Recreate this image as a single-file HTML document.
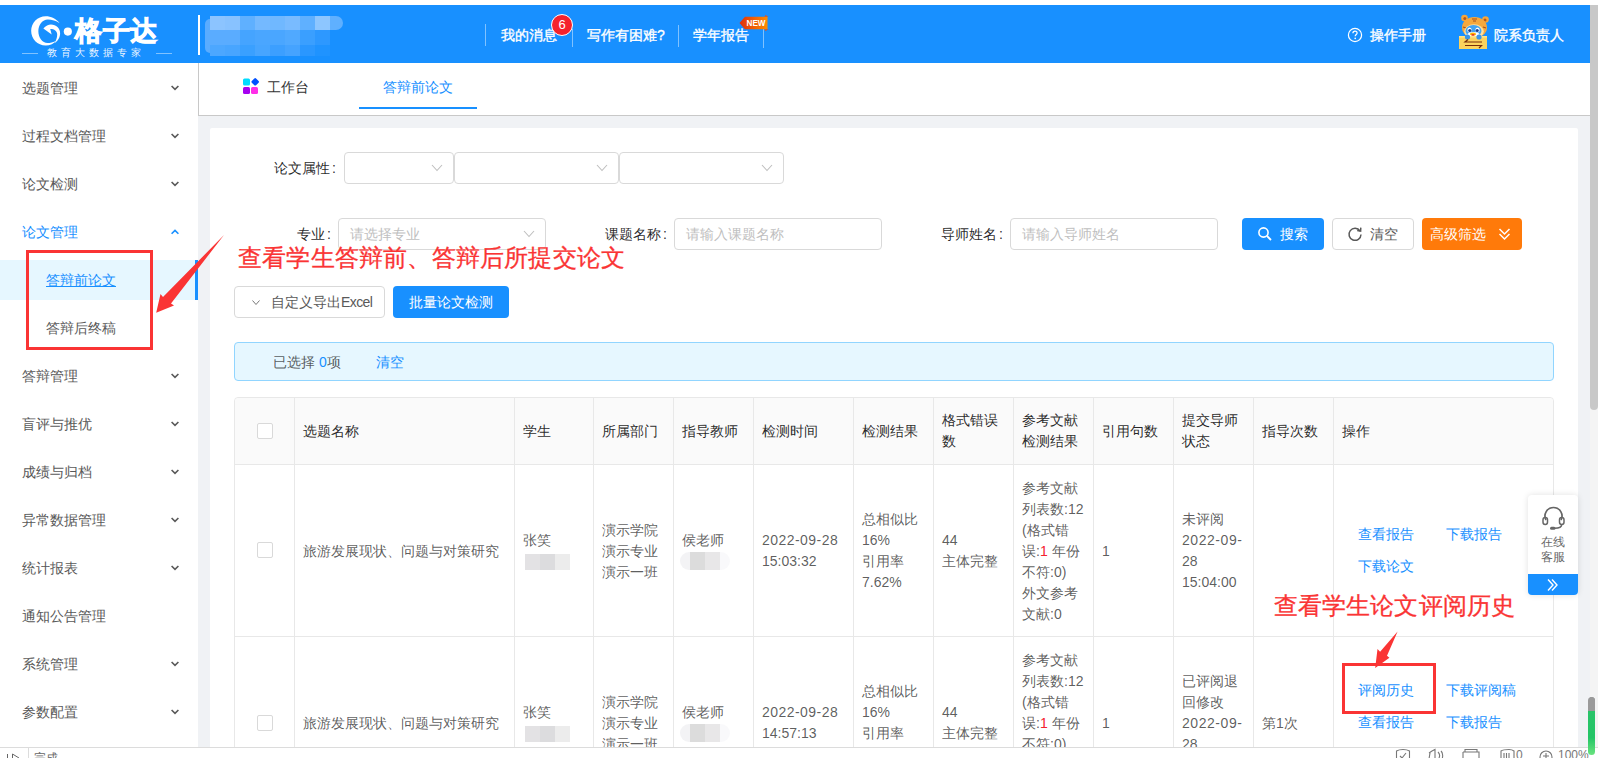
<!DOCTYPE html><html><head><meta charset="utf-8"><style>
*{box-sizing:border-box;margin:0;padding:0}
html,body{width:1598px;height:758px;overflow:hidden;background:#fff}
body{position:relative;font-family:"Liberation Sans",sans-serif;font-size:14px;color:rgba(0,0,0,.65);line-height:21px}
.a{position:absolute;white-space:nowrap}
.w{color:#fff;-webkit-text-stroke:0.35px #fff}
.mi{position:absolute;left:22px;color:#595959;white-space:nowrap}
.lbl{position:absolute;color:rgba(0,0,0,.85);white-space:nowrap}
.th{position:absolute;color:rgba(0,0,0,.85);white-space:nowrap}
.td{position:absolute;color:rgba(0,0,0,.65);white-space:nowrap}
.lk{position:absolute;color:#1890ff;white-space:nowrap}
.box{position:absolute}
.sel{position:absolute;border:1px solid #d9d9d9;border-radius:4px;background:#fff;height:32px}
.ph{position:absolute;color:#bfbfbf;white-space:nowrap}
.cb{position:absolute;width:16px;height:16px;border:1px solid #d9d9d9;border-radius:2px;background:#fff}
.vl{position:absolute;width:1px;background:#e8e8e8}
</style></head><body>
<div class="box" style="left:0px;top:5px;width:1590px;height:58px;background:#1890ff"></div>
<svg class="box" style="left:27px;top:11px" width="50" height="38" viewBox="0 0 48 36">
<path fill="#fff" d="M31.3 11.4 C28 7 23 4.7 18 4.7 C10 4.7 4 11 4 18.7 C4 26.5 10 32.8 18 32.8 C22 32.8 26 31 28.5 28 C25 30 22 30.4 19.7 30.4 C14.8 30.4 10.9 25.3 10.9 19.1 C10.9 12.9 14.8 7.8 20 7.8 C24 7.8 28 9 31.3 11.4 Z"/>
<path fill="#fff" d="M15.7 16.6 C18 14 20.5 12.8 23 12.8 C28 12.8 31.8 16.5 31.8 21 C31.8 25 29.5 28.5 26.6 30.4 C28 28 29 25 29 22.3 C29 19 26 17 22.3 17.1 L23.7 22.3 Z"/>
<circle cx="39.2" cy="19.5" r="3.9" fill="#fff"/>
</svg>
<div class="a w" style="left:75px;top:13px;font-size:27px;line-height:36px;font-weight:bold;letter-spacing:0.5px;-webkit-text-stroke:1px #fff">格子达</div>
<div class="a" style="left:47px;top:47px;font-size:9.5px;line-height:12px;letter-spacing:4px;color:rgba(255,255,255,.92)">教育大数据专家</div>
<div class="box" style="left:22px;top:53px;width:16px;height:1px;background:rgba(255,255,255,.45)"></div>
<div class="box" style="left:156px;top:53px;width:16px;height:1px;background:rgba(255,255,255,.45)"></div>
<div class="box" style="left:198px;top:15px;width:2px;height:40px;background:#fff"></div>
<div class="box" style="left:210px;top:16px;width:15px;height:14px;background:#8cc4ff"></div>
<div class="box" style="left:225px;top:16px;width:15px;height:14px;background:#88c2ff"></div>
<div class="box" style="left:240px;top:16px;width:15px;height:14px;background:#5fb0ff"></div>
<div class="box" style="left:255px;top:16px;width:15px;height:14px;background:#74b9ff"></div>
<div class="box" style="left:270px;top:16px;width:15px;height:14px;background:#70b8ff"></div>
<div class="box" style="left:285px;top:16px;width:15px;height:14px;background:#79bbff"></div>
<div class="box" style="left:300px;top:16px;width:15px;height:14px;background:#5fb0ff"></div>
<div class="box" style="left:315px;top:16px;width:15px;height:14px;background:#8dc6ff"></div>
<div class="box" style="left:210px;top:30px;width:15px;height:15px;background:#5aacff"></div>
<div class="box" style="left:225px;top:30px;width:15px;height:15px;background:#5aacff"></div>
<div class="box" style="left:240px;top:30px;width:15px;height:15px;background:#45a4ff"></div>
<div class="box" style="left:255px;top:30px;width:15px;height:15px;background:#4aa6ff"></div>
<div class="box" style="left:270px;top:30px;width:15px;height:15px;background:#4aa6ff"></div>
<div class="box" style="left:285px;top:30px;width:15px;height:15px;background:#50a9ff"></div>
<div class="box" style="left:300px;top:30px;width:15px;height:15px;background:#3a9fff"></div>
<div class="box" style="left:315px;top:30px;width:15px;height:15px;background:#2d98ff"></div>
<div class="box" style="left:210px;top:45px;width:15px;height:11px;background:#4ca7ff"></div>
<div class="box" style="left:225px;top:45px;width:15px;height:11px;background:#48a5ff"></div>
<div class="box" style="left:240px;top:45px;width:15px;height:11px;background:#3aa0ff"></div>
<div class="box" style="left:255px;top:45px;width:15px;height:11px;background:#47a5ff"></div>
<div class="box" style="left:270px;top:45px;width:15px;height:11px;background:#3c9fff"></div>
<div class="box" style="left:285px;top:45px;width:15px;height:11px;background:#45a3ff"></div>
<div class="box" style="left:300px;top:45px;width:15px;height:11px;background:#2a97ff"></div>
<div class="box" style="left:315px;top:45px;width:15px;height:11px;background:#1f93ff"></div>
<div class="box" style="left:205px;top:19px;width:5px;height:34px;background:#5aacff;border-radius:5px 0 0 5px"></div>
<div class="box" style="left:330px;top:16px;width:13px;height:14px;background:#5fb0ff;border-radius:0 7px 7px 0"></div>
<div class="box" style="left:485px;top:24px;width:1px;height:22px;background:rgba(255,255,255,.45)"></div>
<div class="box" style="left:572px;top:29px;width:1px;height:18px;background:rgba(255,255,255,.45)"></div>
<div class="box" style="left:678px;top:25px;width:1px;height:22px;background:rgba(255,255,255,.45)"></div>
<div class="box" style="left:763px;top:29px;width:1px;height:19px;background:rgba(255,255,255,.45)"></div>
<div class="a w" style="left:501px;top:24.5px;">我的消息</div>
<div class="box" style="left:551px;top:14px;width:22px;height:22px;border-radius:11px;background:#f5222d;border:1.5px solid #fff;color:#fff;font-size:13px;line-height:19px;text-align:center">6</div>
<div class="a w" style="left:587px;top:24.5px;">写作有困难?</div>
<div class="a w" style="left:693px;top:24.5px;">学年报告</div>
<svg class="box" style="left:739px;top:15px" width="30" height="16" viewBox="0 0 30 16">
<defs><linearGradient id="ng" x1="0" x2="1"><stop offset="0" stop-color="#e0300c"/><stop offset="1" stop-color="#ff8c00"/></linearGradient></defs>
<path d="M0.5 8 L6 1.8 L28.5 1.8 L28.5 14.2 L6 14.2 Z" fill="url(#ng)"/><path d="M25.5 1.8 L26.5 0 L29.5 1.8 Z M25.5 14.2 L26.5 16 L29.5 14.2 Z" fill="#e8501a"/>
<text x="7.5" y="10.9" font-family="Liberation Sans" font-size="9" font-weight="bold" fill="#fff" textLength="19" lengthAdjust="spacingAndGlyphs">NEW</text>
</svg>
<svg class="box" style="left:1347px;top:27px" width="16" height="16" viewBox="0 0 16 16">
<circle cx="8" cy="8" r="6.6" fill="none" stroke="#fff" stroke-width="1.2"/>
<path d="M5.9 6.3 C5.9 4.9 6.9 4.2 8 4.2 C9.2 4.2 10.1 5 10.1 6.1 C10.1 7.4 8.2 7.6 8.2 9.3" fill="none" stroke="#fff" stroke-width="1.2"/>
<circle cx="8.2" cy="11.4" r="0.8" fill="#fff"/>
</svg>
<div class="a w" style="left:1370px;top:24.5px;">操作手册</div>
<svg class="box" style="left:1452px;top:10px" width="42" height="42" viewBox="0 0 42 42">
<circle cx="12.5" cy="8" r="3.3" fill="#f6a53a"/><circle cx="33.5" cy="9.5" r="3.3" fill="#f6a53a"/>
<circle cx="12.8" cy="8.5" r="1.5" fill="#b5561a"/><circle cx="33" cy="10" r="1.5" fill="#b5561a"/>
<ellipse cx="22.5" cy="17.5" rx="12.5" ry="10.5" fill="#f7a83c"/>
<path d="M20 9 L25 9 M21 11 L24 11 M11 17 L14 18 M31 17 L34 18" stroke="#a8501a" stroke-width="1.2"/>
<ellipse cx="22" cy="21.5" rx="9.8" ry="7.2" fill="#fde0a0"/>
<ellipse cx="21.5" cy="21" rx="8" ry="6" fill="#43a3f2"/>
<ellipse cx="17.5" cy="20" rx="2.2" ry="2.6" fill="#fff"/><ellipse cx="25.5" cy="20" rx="2.2" ry="2.6" fill="#fff"/>
<circle cx="17.8" cy="20.5" r="1.6" fill="#1a3f8f"/><circle cx="25.2" cy="20.5" r="1.6" fill="#1a3f8f"/>
<ellipse cx="21.5" cy="24.5" rx="6" ry="2.5" fill="#fff"/>
<ellipse cx="21" cy="24" rx="3" ry="1.6" fill="#ffb300"/><ellipse cx="21" cy="24.8" rx="1.6" ry="0.9" fill="#e8322a"/>
<rect x="7" y="26" width="28" height="13" fill="#fcd35c"/>
<rect x="7" y="26" width="28" height="1.5" fill="#fde58f"/>
<circle cx="15.5" cy="27" r="2.6" fill="#3a95e8"/><circle cx="27" cy="27" r="2.6" fill="#3a95e8"/>
<path d="M16 29.5 L13 32 L30 32 M13 35.5 L29.5 35.5 L27 38" fill="none" stroke="#7a2e08" stroke-width="1.2"/>
</svg>
<div class="a w" style="left:1494px;top:24.5px;">院系负责人</div>
<div class="box" style="left:1590px;top:5px;width:8px;height:742px;background:#f4f4f4"></div>
<div class="box" style="left:1590px;top:5px;width:8px;height:405px;background:#c8c8c8;border-radius:0 0 4px 4px"></div>
<div class="box" style="left:1588px;top:697px;width:7px;height:58px;background:linear-gradient(#9a9a9a 0,#9a9a9a 24%,#2ac46a 24%,#23c566 70%,#6ae37f 100%);border-radius:4px"></div>
<div class="mi" style="left:22px;top:77.5px;color:#595959">选题管理</div>
<svg class="box" style="left:171px;top:84.5px" width="8" height="6" viewBox="0 0 8 6"><path d="M0.6 1 L4 4.4 L7.4 1" fill="none" stroke="#595959" stroke-width="1.6"/></svg>
<div class="mi" style="left:22px;top:125.5px;color:#595959">过程文档管理</div>
<svg class="box" style="left:171px;top:132.5px" width="8" height="6" viewBox="0 0 8 6"><path d="M0.6 1 L4 4.4 L7.4 1" fill="none" stroke="#595959" stroke-width="1.6"/></svg>
<div class="mi" style="left:22px;top:173.5px;color:#595959">论文检测</div>
<svg class="box" style="left:171px;top:180.5px" width="8" height="6" viewBox="0 0 8 6"><path d="M0.6 1 L4 4.4 L7.4 1" fill="none" stroke="#595959" stroke-width="1.6"/></svg>
<div class="mi" style="left:22px;top:221.5px;color:#1890ff">论文管理</div>
<svg class="box" style="left:171px;top:228.5px" width="8" height="6" viewBox="0 0 8 6"><path d="M0.6 4.8 L4 1.4 L7.4 4.8" fill="none" stroke="#1890ff" stroke-width="1.6"/></svg>
<div class="box" style="left:0px;top:260px;width:198px;height:40px;background:#e6f7ff"></div>
<div class="box" style="left:195px;top:260px;width:3px;height:40px;background:#1890ff"></div>
<div class="a" style="left:46px;top:269.5px;color:#1890ff;text-decoration:underline">答辩前论文</div>
<div class="a" style="left:46px;top:317.5px;color:#595959">答辩后终稿</div>
<div class="mi" style="left:22px;top:365.5px;">答辩管理</div>
<svg class="box" style="left:171px;top:372.5px" width="8" height="6" viewBox="0 0 8 6"><path d="M0.6 1 L4 4.4 L7.4 1" fill="none" stroke="#595959" stroke-width="1.6"/></svg>
<div class="mi" style="left:22px;top:413.5px;">盲评与推优</div>
<svg class="box" style="left:171px;top:420.5px" width="8" height="6" viewBox="0 0 8 6"><path d="M0.6 1 L4 4.4 L7.4 1" fill="none" stroke="#595959" stroke-width="1.6"/></svg>
<div class="mi" style="left:22px;top:461.5px;">成绩与归档</div>
<svg class="box" style="left:171px;top:468.5px" width="8" height="6" viewBox="0 0 8 6"><path d="M0.6 1 L4 4.4 L7.4 1" fill="none" stroke="#595959" stroke-width="1.6"/></svg>
<div class="mi" style="left:22px;top:509.5px;">异常数据管理</div>
<svg class="box" style="left:171px;top:516.5px" width="8" height="6" viewBox="0 0 8 6"><path d="M0.6 1 L4 4.4 L7.4 1" fill="none" stroke="#595959" stroke-width="1.6"/></svg>
<div class="mi" style="left:22px;top:557.5px;">统计报表</div>
<svg class="box" style="left:171px;top:564.5px" width="8" height="6" viewBox="0 0 8 6"><path d="M0.6 1 L4 4.4 L7.4 1" fill="none" stroke="#595959" stroke-width="1.6"/></svg>
<div class="mi" style="left:22px;top:605.5px;">通知公告管理</div>
<div class="mi" style="left:22px;top:653.5px;">系统管理</div>
<svg class="box" style="left:171px;top:660.5px" width="8" height="6" viewBox="0 0 8 6"><path d="M0.6 1 L4 4.4 L7.4 1" fill="none" stroke="#595959" stroke-width="1.6"/></svg>
<div class="mi" style="left:22px;top:701.5px;">参数配置</div>
<svg class="box" style="left:171px;top:708.5px" width="8" height="6" viewBox="0 0 8 6"><path d="M0.6 1 L4 4.4 L7.4 1" fill="none" stroke="#595959" stroke-width="1.6"/></svg>
<div class="box" style="left:198px;top:63px;width:1392px;height:684px;background:#f0f2f5"></div>
<div class="box" style="left:198px;top:63px;width:1392px;height:53px;background:#fff;border-left:1px solid #c8c8c8;border-bottom:1px solid #c8c8c8"></div>
<svg class="box" style="left:242px;top:77px" width="18" height="18" viewBox="0 0 18 18">
<rect x="1" y="1.5" width="7" height="7" rx="1.5" fill="#00dcff"/>
<rect x="10.2" y="1.8" width="6" height="6" rx="1.2" fill="#0050ff" transform="rotate(45 13.2 4.8)"/>
<rect x="1" y="10" width="7" height="7" rx="1.5" fill="#a600f0"/>
<rect x="9" y="10" width="7" height="7" rx="1.5" fill="#ff2ee8"/>
</svg>
<div class="a" style="left:267px;top:76.5px;color:#333">工作台</div>
<div class="a" style="left:383px;top:76.5px;color:#1890ff">答辩前论文</div>
<div class="box" style="left:359px;top:107px;width:118px;height:2px;background:#1890ff"></div>
<div class="box" style="left:210px;top:128px;width:1368px;height:640px;background:#fff;border-radius:2px"></div>
<div class="lbl" style="left:274px;top:157.5px;">论文属性<span style="margin-left:2px">:</span></div>
<div class="sel" style="left:344px;top:152px;width:110px"></div>
<svg class="box" style="left:431px;top:164px" width="12" height="8" viewBox="0 0 12 8"><path d="M1 1 L6 6.5 L11 1" fill="none" stroke="#bfbfbf" stroke-width="1.1"/></svg>
<div class="sel" style="left:454px;top:152px;width:165px"></div>
<svg class="box" style="left:596px;top:164px" width="12" height="8" viewBox="0 0 12 8"><path d="M1 1 L6 6.5 L11 1" fill="none" stroke="#bfbfbf" stroke-width="1.1"/></svg>
<div class="sel" style="left:619px;top:152px;width:165px"></div>
<svg class="box" style="left:761px;top:164px" width="12" height="8" viewBox="0 0 12 8"><path d="M1 1 L6 6.5 L11 1" fill="none" stroke="#bfbfbf" stroke-width="1.1"/></svg>
<div class="lbl" style="left:297px;top:223.5px;">专业<span style="margin-left:2px">:</span></div>
<div class="sel" style="left:338px;top:218px;width:208px"></div>
<div class="ph" style="left:350px;top:223.5px;">请选择专业</div>
<svg class="box" style="left:523px;top:230px" width="12" height="8" viewBox="0 0 12 8"><path d="M1 1 L6 6.5 L11 1" fill="none" stroke="#bfbfbf" stroke-width="1.1"/></svg>
<div class="lbl" style="left:605px;top:223.5px;">课题名称<span style="margin-left:2px">:</span></div>
<div class="sel" style="left:674px;top:218px;width:208px"></div>
<div class="ph" style="left:686px;top:223.5px;">请输入课题名称</div>
<div class="lbl" style="left:941px;top:223.5px;">导师姓名<span style="margin-left:2px">:</span></div>
<div class="sel" style="left:1010px;top:218px;width:208px"></div>
<div class="ph" style="left:1022px;top:223.5px;">请输入导师姓名</div>
<div class="box" style="left:1242px;top:218px;width:82px;height:32px;background:#1890ff;border-radius:4px"></div>
<svg class="box" style="left:1257px;top:226px" width="16" height="16" viewBox="0 0 16 16"><circle cx="6.5" cy="6.5" r="4.6" fill="none" stroke="#fff" stroke-width="1.6"/><path d="M10 10 L14 14" stroke="#fff" stroke-width="1.8"/></svg>
<div class="a" style="left:1280px;top:223.5px;color:#fff">搜索</div>
<div class="box" style="left:1332px;top:218px;width:82px;height:32px;background:#fff;border:1px solid #d9d9d9;border-radius:4px"></div>
<svg class="box" style="left:1347px;top:226px" width="16" height="16" viewBox="0 0 16 16"><path d="M13 5 A6 6 0 1 0 14 8.5" fill="none" stroke="#595959" stroke-width="1.5"/><path d="M10.2 4.6 L13.6 5.2 L13.8 1.6" fill="none" stroke="#595959" stroke-width="1.5"/></svg>
<div class="a" style="left:1370px;top:223.5px;color:#595959">清空</div>
<div class="box" style="left:1422px;top:218px;width:100px;height:32px;background:#ff7a0a;border-radius:4px"></div>
<div class="a" style="left:1430px;top:223.5px;color:#fff">高级筛选</div>
<svg class="box" style="left:1498px;top:227px" width="13" height="14" viewBox="0 0 13 14"><path d="M1.5 2 L6.5 7 L11.5 2 M1.5 7 L6.5 12 L11.5 7" fill="none" stroke="#fff" stroke-width="1.5"/></svg>
<div class="a" style="left:238px;top:242px;font-size:24px;line-height:32px;letter-spacing:0.2px;color:#fa3434;-webkit-text-stroke:0.3px #fa3434">查看学生答辩前、答辩后所提交论文</div>
<div class="box" style="left:26px;top:250px;width:127px;height:100px;border:3px solid #fa3434"></div>
<div class="box" style="left:234px;top:286px;width:151px;height:32px;background:#fff;border:1px solid #d9d9d9;border-radius:4px"></div>
<svg class="box" style="left:251px;top:299px" width="10" height="8" viewBox="0 0 10 8"><path d="M1.5 1.5 L5 5.5 L8.5 1.5" fill="none" stroke="#777" stroke-width="1"/></svg>
<div class="a" style="left:271px;top:291.5px;color:#595959">自定义导出<span style="letter-spacing:-0.6px">Excel</span></div>
<div class="box" style="left:393px;top:286px;width:116px;height:32px;background:#1890ff;border-radius:4px"></div>
<div class="a" style="left:409px;top:291.5px;color:#fff">批量论文检测</div>
<div class="box" style="left:234px;top:342px;width:1320px;height:39px;background:#e6f7ff;border:1px solid #91d5ff;border-radius:4px"></div>
<div class="a" style="left:273px;top:351.5px;color:rgba(0,0,0,.65)">已选择 <span style="color:#1890ff">0</span>项</div>
<div class="a" style="left:376px;top:351.5px;color:#1890ff">清空</div>
<div class="box" style="left:234px;top:397px;width:1320px;height:400px;border:1px solid #e8e8e8;border-radius:4px 4px 0 0"></div>
<div class="box" style="left:235px;top:398px;width:1318px;height:66px;background:#fafafa;border-radius:4px 4px 0 0"></div>
<div class="box" style="left:234px;top:464px;width:1320px;height:1px;background:#e8e8e8"></div>
<div class="box" style="left:234px;top:636px;width:1320px;height:1px;background:#e8e8e8"></div>
<div class="box" style="left:294px;top:397px;width:1px;height:400px;background:#e8e8e8"></div>
<div class="box" style="left:514px;top:397px;width:1px;height:400px;background:#e8e8e8"></div>
<div class="box" style="left:593px;top:397px;width:1px;height:400px;background:#e8e8e8"></div>
<div class="box" style="left:673px;top:397px;width:1px;height:400px;background:#e8e8e8"></div>
<div class="box" style="left:753px;top:397px;width:1px;height:400px;background:#e8e8e8"></div>
<div class="box" style="left:853px;top:397px;width:1px;height:400px;background:#e8e8e8"></div>
<div class="box" style="left:933px;top:397px;width:1px;height:400px;background:#e8e8e8"></div>
<div class="box" style="left:1013px;top:397px;width:1px;height:400px;background:#e8e8e8"></div>
<div class="box" style="left:1093px;top:397px;width:1px;height:400px;background:#e8e8e8"></div>
<div class="box" style="left:1173px;top:397px;width:1px;height:400px;background:#e8e8e8"></div>
<div class="box" style="left:1253px;top:397px;width:1px;height:400px;background:#e8e8e8"></div>
<div class="box" style="left:1333px;top:397px;width:1px;height:400px;background:#e8e8e8"></div>
<div class="cb" style="left:257px;top:423px"></div>
<div class="th" style="left:303px;top:420.5px;">选题名称</div>
<div class="th" style="left:523px;top:420.5px;">学生</div>
<div class="th" style="left:602px;top:420.5px;">所属部门</div>
<div class="th" style="left:682px;top:420.5px;">指导教师</div>
<div class="th" style="left:762px;top:420.5px;">检测时间</div>
<div class="th" style="left:862px;top:420.5px;">检测结果</div>
<div class="th" style="left:942px;top:410.0px;">格式错误<br>数</div>
<div class="th" style="left:1022px;top:410.0px;">参考文献<br>检测结果</div>
<div class="th" style="left:1102px;top:420.5px;">引用句数</div>
<div class="th" style="left:1182px;top:410.0px;">提交导师<br>状态</div>
<div class="th" style="left:1262px;top:420.5px;">指导次数</div>
<div class="th" style="left:1342px;top:420.5px;">操作</div>
<div class="cb" style="left:257px;top:542px"></div>
<div class="td" style="left:303px;top:540.5px;">旅游发展现状、问题与对策研究</div>
<div class="td" style="left:523px;top:529.5px;">张笑</div>
<div class="box" style="left:525px;top:554px;height:16px;display:flex"><div style="width:15px;height:16px;background:#e3e2e4"></div><div style="width:15px;height:16px;background:#dcdcde"></div><div style="width:15px;height:16px;background:#ececec"></div></div>
<div class="td" style="left:602px;top:519.5px;">演示学院<br>演示专业<br>演示一班</div>
<div class="td" style="left:682px;top:529.5px;">侯老师</div>
<div class="box" style="left:680px;top:552px;width:50px;height:18px;background:linear-gradient(90deg,#f3f3f5 0,#f3f3f5 20%,#dcdcdc 20%,#dcdcdc 50%,#e8e7e8 50%,#e8e7e8 80%,#f9f9fb 80%);border-radius:9px"></div>
<div class="td" style="left:762px;top:530.0px;"><span style="letter-spacing:0.45px">2022-09-28</span><br>15:03:32</div>
<div class="td" style="left:862px;top:509.0px;">总相似比<br>16%<br>引用率<br>7.62%</div>
<div class="td" style="left:942px;top:530.0px;">44<br>主体完整</div>
<div class="td" style="left:1022px;top:477.5px;">参考文献<br>列表数:12<br>(格式错<br>误:<span style="color:#f5222d">1</span> 年份<br>不符:0)<br>外文参考<br>文献:0</div>
<div class="td" style="left:1102px;top:540.5px;">1</div>
<div class="td" style="left:1182px;top:509.0px;">未评阅<br><span style="letter-spacing:0.55px">2022-09-</span><br>28<br>15:04:00</div>
<div class="lk" style="left:1358px;top:523.5px;">查看报告</div>
<div class="lk" style="left:1446px;top:523.5px;">下载报告</div>
<div class="lk" style="left:1358px;top:555.5px;">下载论文</div>
<div class="cb" style="left:257px;top:715px"></div>
<div class="td" style="left:303px;top:712.5px;">旅游发展现状、问题与对策研究</div>
<div class="td" style="left:523px;top:701.5px;">张笑</div>
<div class="box" style="left:525px;top:726px;height:16px;display:flex"><div style="width:15px;height:16px;background:#e3e2e4"></div><div style="width:15px;height:16px;background:#dcdcde"></div><div style="width:15px;height:16px;background:#ececec"></div></div>
<div class="td" style="left:602px;top:691.5px;">演示学院<br>演示专业<br>演示一班</div>
<div class="td" style="left:682px;top:701.5px;">侯老师</div>
<div class="box" style="left:680px;top:724px;width:50px;height:18px;background:linear-gradient(90deg,#f3f3f5 0,#f3f3f5 20%,#dcdcdc 20%,#dcdcdc 50%,#e8e7e8 50%,#e8e7e8 80%,#f9f9fb 80%);border-radius:9px"></div>
<div class="td" style="left:762px;top:702.0px;"><span style="letter-spacing:0.45px">2022-09-28</span><br>14:57:13</div>
<div class="td" style="left:862px;top:681.0px;">总相似比<br>16%<br>引用率<br>7.62%</div>
<div class="td" style="left:942px;top:702.0px;">44<br>主体完整</div>
<div class="td" style="left:1022px;top:649.5px;">参考文献<br>列表数:12<br>(格式错<br>误:<span style="color:#f5222d">1</span> 年份<br>不符:0)<br>外文参考<br>文献:0</div>
<div class="td" style="left:1102px;top:712.5px;">1</div>
<div class="td" style="left:1182px;top:670.5px;">已评阅退<br>回修改<br><span style="letter-spacing:0.55px">2022-09-</span><br>28<br>14:58:00</div>
<div class="td" style="left:1262px;top:712.5px;">第1次</div>
<div class="lk" style="left:1358px;top:679.5px;">评阅历史</div>
<div class="lk" style="left:1446px;top:679.5px;">下载评阅稿</div>
<div class="lk" style="left:1358px;top:711.5px;">查看报告</div>
<div class="lk" style="left:1446px;top:711.5px;">下载报告</div>
<div class="a" style="left:1273.5px;top:590px;font-size:24px;line-height:32px;letter-spacing:0.2px;color:#fa3434;-webkit-text-stroke:0.3px #fa3434">查看学生论文评阅历史</div>
<div class="box" style="left:1342px;top:663px;width:94px;height:51px;border:3px solid #fa3434"></div>
<svg class="box" style="left:0;top:0" width="1598" height="758"><path d="M224 235 L171 303.5 L174 305.5 L156.2 312.7 L160.5 294 L163 297 Z" fill="#fa3434"/><path d="M1397.6 631.6 L1387 655.7 L1389.4 657.7 L1375.2 667.9 L1377.5 649.1 L1380.1 651.7 Z" fill="#fa3434"/></svg>
<div class="box" style="left:1528px;top:495px;width:50px;height:100px;background:#fff;border-radius:4px;box-shadow:0 0 6px rgba(0,0,0,.12)"></div>
<svg class="box" style="left:1541px;top:506px" width="25" height="24" viewBox="0 0 25 24">
<path d="M5 14 A8.5 8.5 0 1 1 20 14" fill="none" stroke="#666" stroke-width="1.7"/>
<rect x="2" y="11.5" width="4.5" height="7" rx="2.2" fill="none" stroke="#666" stroke-width="1.5"/>
<rect x="18.5" y="11.5" width="4.5" height="7" rx="2.2" fill="none" stroke="#666" stroke-width="1.5"/>
<path d="M20.7 18.5 C20.7 21 18 22.3 13.5 22.3" fill="none" stroke="#666" stroke-width="1.5"/>
<rect x="9" y="20.8" width="5.5" height="3" rx="1.5" fill="#666"/>
</svg>
<div class="a" style="left:1541px;top:535px;font-size:12px;line-height:15px;color:#666;white-space:normal;width:26px">在线<br>客服</div>
<div class="box" style="left:1528px;top:574px;width:50px;height:21px;background:#1890ff;border-radius:0 0 4px 4px"></div>
<svg class="box" style="left:1546px;top:578px" width="13" height="14" viewBox="0 0 13 14"><path d="M2 1.5 L7 7 L2 12.5 M6 1.5 L11 7 L6 12.5" fill="none" stroke="#fff" stroke-width="1.4"/></svg>
<div class="box" style="left:0px;top:747px;width:1598px;height:11px;background:#fff;border-top:1px solid #dcdcdc"></div>
<div class="box" style="left:28px;top:748px;width:1px;height:10px;background:#dcdcdc"></div>
<svg class="box" style="left:0;top:748px" width="28" height="10"><path d="M7.5 6 L7.5 10 M12.5 10 L12.5 6 L19 10" fill="none" stroke="#666" stroke-width="1"/></svg>
<div class="a" style="left:34px;top:751px;font-size:12px;line-height:14px;color:#666">完成</div>
<svg class="box" style="left:1390px;top:748px" width="200" height="10" viewBox="0 0 200 10">
<g fill="none" stroke="#777" stroke-width="1.1">
<path d="M6.5 11 L6.5 3 C9 1.5 11 1.5 13 1.5 C15 1.5 17 1.5 19.5 3 L19.5 11"/><path d="M10 8 L12 10 L16 5"/>
<path d="M39 5 L42 3 L45 1.5 L45 11 M40 5 L39 11 M48 4 C50 6 50 8 49 10 M51 3 C53 5 53 9 52 11"/>
<path d="M75 4 L75 1.5 L87 1.5 L87 4 M73 4 L89 4 L89 11 M73 4 L73 11"/>
<path d="M111 11 L111 3 C113 1.5 117 1.5 119 1.5 C121 1.5 122 1.5 124 3 L124 11"/><path d="M114 5 L114 10 M116.5 5 L116.5 10 M119 5 L119 10"/>
<circle cx="156" cy="9" r="6"/><path d="M156 5 L156 11 M153 8 L159 8"/>
</g>
<text x="126" y="11" font-family="Liberation Sans" font-size="12" fill="#777">0</text>
<text x="168" y="11" font-family="Liberation Sans" font-size="12" fill="#777">100%</text>
</svg>
<div class="box" style="left:1588px;top:697px;width:7px;height:58px;background:linear-gradient(#9a9a9a 0,#9a9a9a 24%,#2ac46a 24%,#23c566 70%,#6ae37f 100%);border-radius:4px"></div>
</body></html>
